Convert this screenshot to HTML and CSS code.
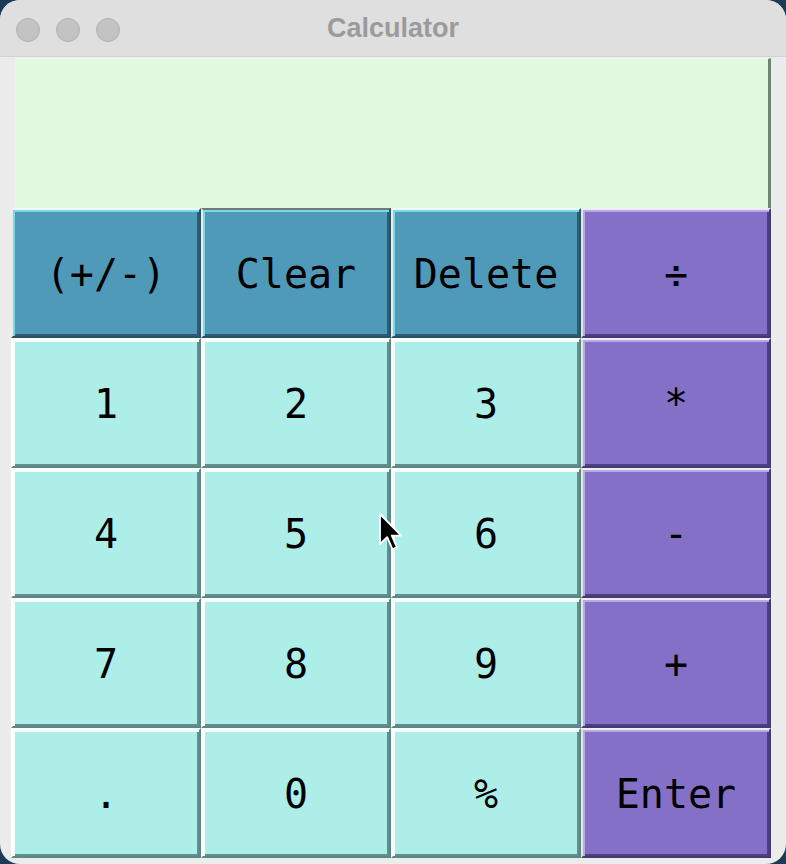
FILE: index.html
```html
<!DOCTYPE html>
<html>
<head>
<meta charset="utf-8">
<title>Calculator</title>
<link rel="stylesheet" href="styles.css">
</head>
<body>
<div class="window">
  <div class="titlebar">
    <div class="lights">
      <span class="light"></span>
      <span class="light"></span>
      <span class="light"></span>
    </div>
    <div class="title">Calculator</div>
    <div></div>
  </div>
  <div class="content">
    <div class="display"></div>
    <div class="keys">
      <div class="key fn">(+/-)</div>
      <div class="key fn clear">Clear</div>
      <div class="key fn">Delete</div>
      <div class="key op">÷</div>

      <div class="key num">1</div>
      <div class="key num">2</div>
      <div class="key num">3</div>
      <div class="key op">*</div>

      <div class="key num">4</div>
      <div class="key num">5</div>
      <div class="key num">6</div>
      <div class="key op">-</div>

      <div class="key num">7</div>
      <div class="key num">8</div>
      <div class="key num">9</div>
      <div class="key op">+</div>

      <div class="key num">.</div>
      <div class="key num">0</div>
      <div class="key num">%</div>
      <div class="key op">Enter</div>
    </div>
  </div>
  <svg class="cursor" width="26" height="40" viewBox="0 0 13 20">
    <path d="M1 1 L1 16 L4.6 12.6 L7.2 18.6 L9.4 17.6 L6.9 11.8 L11.6 11.8 Z" fill="#000" stroke="#fff" stroke-width="0.9" stroke-linejoin="round"/>
  </svg>
</div>
</body>
</html>
```

FILE: styles.css
```css
html, body {
  margin: 0;
  padding: 0;
}
html {
  background: #1d3b57;
}
body {
  background: #1d3b57;
  width: 786px;
  height: 864px;
  overflow: hidden;
}
.window {
  position: relative;
  width: 786px;
  height: 864px;
  background: #ececec;
  border-radius: 20px;
  overflow: hidden;
  display: flex;
  flex-direction: column;
}
.titlebar {
  height: 56px;
  flex: 0 0 auto;
  background: #dfdfe0;
  border-bottom: 1px solid #d2d2d2;
  display: grid;
  grid-template-columns: 1fr auto 1fr;
  align-items: center;
}
.lights {
  display: flex;
  gap: 16px;
  padding-left: 16px;
  padding-top: 3px;
}
.light {
  width: 22px;
  height: 22px;
  border-radius: 50%;
  background: #c3c3c4;
  border: 1px solid #b0b0b1;
}
.title {
  font-family: "Liberation Sans", Arial, sans-serif;
  font-weight: bold;
  font-size: 27px;
  color: #9b9b9b;
  padding-top: 0;
}
.content {
  padding: 1px 0 0 11px;
  display: flex;
  flex-direction: column;
}
.display {
  margin-left: 4px;
  width: 753px;
  height: 149px;
  background: #e1fbe0;
  border-top: 1px solid #f6f6f6;
  border-right: 3px solid #6f866f;
}
.keys {
  width: 760px;
  height: 650px;
  display: grid;
  grid-template-columns: repeat(4, 190px);
  grid-template-rows: repeat(5, 130px);
}
.key {
  box-sizing: border-box;
  display: flex;
  align-items: center;
  justify-content: center;
  font-family: "DejaVu Sans Mono", "Liberation Mono", monospace;
  font-size: 40px;
  color: #000;
  border-style: solid;
  border-width: 2px 2px 2px 2px;
  padding-top: 2px;
}
.fn {
  background: #4f99b9;
  border-color: #f2f6f6 #2b5366 #2b5366 #e6ecec;
  box-shadow: inset 2px 2px 0 #7ad8e8, inset -2px -2px 0 #2f5c70;
}
.fn.clear {
  border-top-color: #6f7a70;
}
.num {
  background: #aeeee8;
  border-color: #ffffff #5a8884 #5a8884 #ffffff;
  box-shadow: inset 2px 2px 0 #f4fffd, inset -2px -2px 0 #628f8b;
}
.op {
  background: #8470c6;
  border-color: #eeeeee #463a76 #463a76 #e4e4e4;
  box-shadow: inset 2px 2px 0 #b9a9ea, inset -2px -2px 0 #4d4080;
}
.cursor {
  position: absolute;
  left: 378px;
  top: 512px;
}
```
